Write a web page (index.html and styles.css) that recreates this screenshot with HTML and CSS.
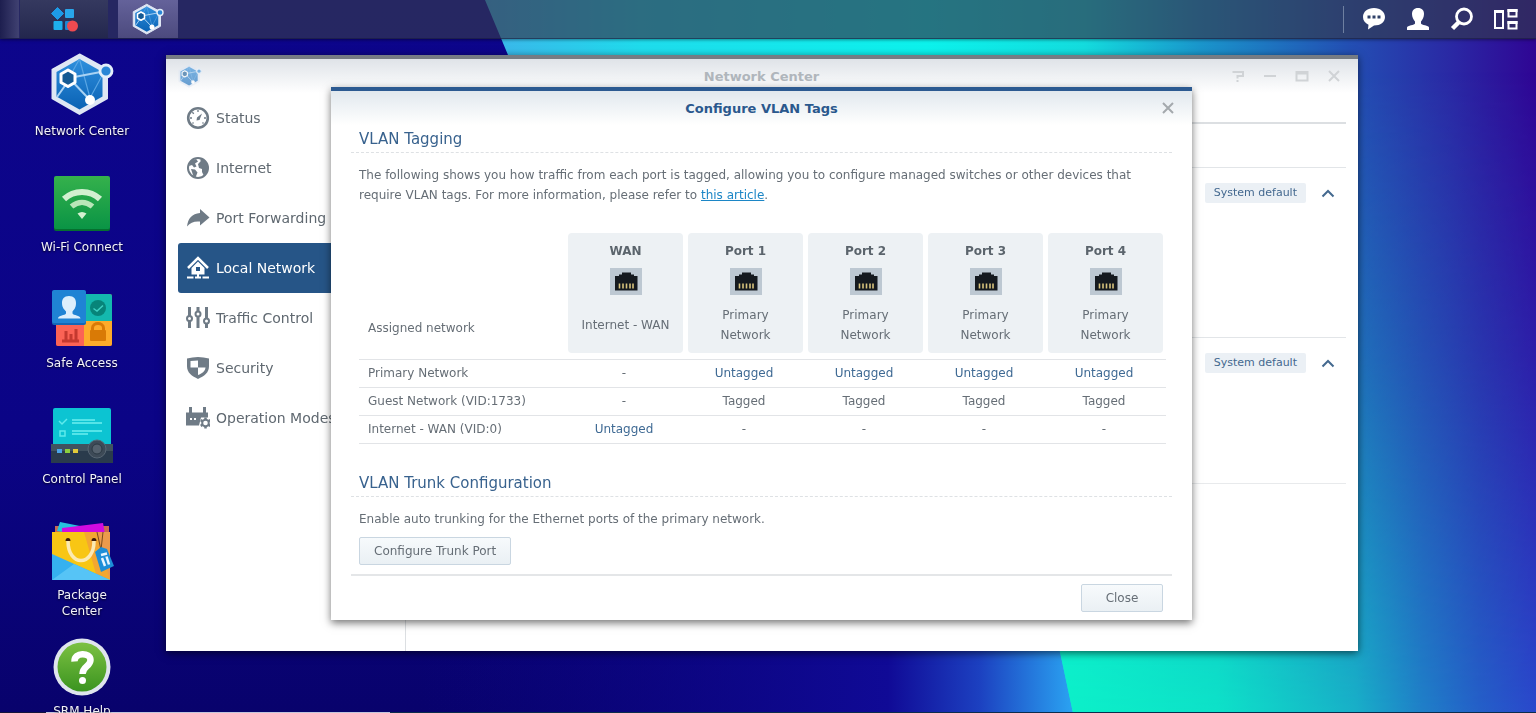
FILE: index.html
```html
<!doctype html>
<html lang="en">
<head>
	<meta charset="UTF-8" />
	<meta name="viewport" content="width=device-width, initial-scale=1.0" />
	<title>Network Center</title>
	<link rel="stylesheet" href="styles.css">
</head>
<body>
	<!-- Shared icons -->
	<svg class="defs" aria-hidden="true">
		<defs>
			<linearGradient id="hexFill" x1="0" y1="0" x2="0" y2="1">
				<stop offset="0" stop-color="#2f8fdd" />
				<stop offset="1" stop-color="#0a62b4" />
			</linearGradient>
			<symbol id="network" viewBox="0 0 64 64">
				<path d="M29.500 2.500 L57 17.500 V46.500 L29.500 62 L2.500 46.500 V17.500Z" fill="#dfe7f4" stroke="#dfe7f4" stroke-width="2" stroke-linejoin="round" />
				<path d="M29.500 7 L52.500 20 V44.500 L29.500 57.500 L6.500 44.500 V20Z" fill="url(#hexFill)" />
				<path d="M29.500 7 L40 46 L53 22 M29.500 7 L20 24" fill="none" stroke="#5aa6e4" stroke-width="1.200" />
				<path d="M19 26 L56 19 M19 26 L39 47 M19 28 L7 45" fill="none" stroke="#a9d2f3" stroke-width="2" />
				<path d="M18 18 l7 4 v8.500 l-7 4 l-7 -4 v-8.500z" fill="#155a94" stroke="#fff" stroke-width="3" stroke-linejoin="round" />
				<circle cx="40" cy="48" r="5" fill="#fff" />
				<circle cx="56" cy="19" r="6" fill="#2a86d6" stroke="#e3eefa" stroke-width="2.800" />
			</symbol>
			<symbol id="port" viewBox="0 0 32 27">
				<path d="M0 0H32V27H0z" fill="#bdc8d2" />
				<path d="M5 8h4V6.500h3V4.500h9v2h3V8h3.500v14.500h-22.500z" fill="#15191f" />
				<path d="M9.500 15.500v5M13 15.500v5M16.500 15.500v5M20 15.500v5M23 15.500v5" stroke="#d8c27c" stroke-width="1.600" />
			</symbol>
			<symbol id="chevron" viewBox="0 0 14 9">
				<path d="M1.500 7.500 L7 2 L12.500 7.500" fill="none" stroke="#44698f" stroke-width="2" />
			</symbol>
		</defs>
	</svg>

	<svg class="wallpaper" viewBox="0 0 1536 713" preserveAspectRatio="none" aria-hidden="true">
		<defs>
			<linearGradient id="deep" x1="0" y1="0" x2="0" y2="1">
				<stop offset="0" stop-color="#0d058c" />
				<stop offset="0.600" stop-color="#0b0486" />
				<stop offset="1" stop-color="#08026c" />
			</linearGradient>
			<linearGradient id="fold" gradientUnits="userSpaceOnUse" x1="420" y1="0" x2="1070" y2="0">
				<stop offset="0" stop-color="#0c0488" stop-opacity="0" />
				<stop offset="0.720" stop-color="#100a96" />
				<stop offset="0.860" stop-color="#1c40c0" />
				<stop offset="1" stop-color="#2aa0f0" />
			</linearGradient>
			<linearGradient id="waveTop" gradientUnits="userSpaceOnUse" x1="485" y1="0" x2="1536" y2="0">
				<stop offset="0" stop-color="#3db4ea" />
				<stop offset="0.150" stop-color="#1fdcec" />
				<stop offset="0.420" stop-color="#0cf2ec" />
				<stop offset="0.570" stop-color="#14dcde" />
				<stop offset="0.680" stop-color="#1a96cc" />
				<stop offset="0.820" stop-color="#2350b4" />
				<stop offset="0.920" stop-color="#2a28a4" />
				<stop offset="1" stop-color="#2f0594" />
			</linearGradient>
			<linearGradient id="waveBottom" gradientUnits="userSpaceOnUse" x1="1060" y1="0" x2="1536" y2="0">
				<stop offset="0" stop-color="#0cf0c8" />
				<stop offset="0.330" stop-color="#0de2c8" />
				<stop offset="0.620" stop-color="#18b0c8" />
				<stop offset="0.760" stop-color="#1f80c8" />
				<stop offset="0.880" stop-color="#2460c8" />
				<stop offset="1" stop-color="#2a48cc" />
			</linearGradient>
			<linearGradient id="fade" x1="0" y1="0" x2="0" y2="1">
				<stop offset="0.100" stop-color="#000" />
				<stop offset="0.500" stop-color="#606060" />
				<stop offset="0.800" stop-color="#c0c0c0" />
				<stop offset="1" stop-color="#fff" />
			</linearGradient>
			<mask id="fadeMask">
				<path d="M0 0H1536V713H0z" fill="url(#fade)" />
			</mask>
		</defs>
		<path d="M0 0H1536V713H0z" fill="url(#deep)" />
		<path d="M420 400H1100V713H420z" fill="url(#fold)" />
		<path d="M485 0 L508 55 C600 270 980 300 1060 652 L1073 713 H1536 V0z" fill="url(#waveTop)" />
		<path d="M1000 0 V520 L1060 652 L1073 713 H1536 V0z" fill="url(#waveBottom)" mask="url(#fadeMask)" />
	</svg>

	<header class="taskbar">
		<div class="tasks">
			<span class="task-edge"></span>
			<button class="task menu" aria-label="Main Menu">
				<svg width="28" height="25" viewBox="0 0 28 25">
					<path d="M7.500 .5 L13.500 6.500 L7.500 12.500 L1.500 6.500z" fill="#1d9ae6" stroke="#1d9ae6" stroke-linejoin="round" />
					<rect x="15" y="2" width="9" height="9" rx="1" fill="#28a6ea" />
					<rect x="3.500" y="14" width="9" height="9" rx="1" fill="#1eb0ee" />
					<rect x="15" y="14" width="9" height="9" rx="1" fill="#1c86d2" />
					<circle cx="22.500" cy="19" r="5.500" fill="#ee4a50" />
				</svg>
			</button>
			<button class="task active" aria-label="Network Center">
				<svg width="32" height="32"><use href="#network" /></svg>
			</button>
		</div>
		<div class="tray">
			<button class="tray-button" aria-label="Notifications">
				<svg width="24" height="24" viewBox="0 0 24 24">
					<path d="M12 1C5.500 1 1 4.800 1 10c0 3.500 2 6.200 5.500 7.700L6 22.500l6-4c6.500 0 11-3.500 11-8.500s-4.500-9-11-9z" fill="#fff" />
					<path d="M5.500 8.500h3v3h-3zM10.500 8.500h3v3h-3zM15.500 8.500h3v3h-3z" fill="#2e4068" />
				</svg>
			</button>
			<button class="tray-button" aria-label="Options">
				<svg width="24" height="24" viewBox="0 0 24 24">
					<path d="M12 1c4 0 6 2.500 6 6 0 3.500-1.500 5.500-3 7.500v2c0 1.500 8 2 8 4V23H1v-2.500c0-2 8-2.500 8-4v-2C7.500 12.500 6 10.500 6 7c0-3.500 2-6 6-6z" fill="#fff" />
				</svg>
			</button>
			<button class="tray-button" aria-label="Search">
				<svg width="24" height="24" viewBox="0 0 24 24">
					<circle cx="14" cy="9.500" r="7.500" fill="none" stroke="#fff" stroke-width="2.800" />
					<path d="M9 15 L2.500 21.500" stroke="#fff" stroke-width="4.500" />
				</svg>
			</button>
			<button class="tray-button" aria-label="Widgets">
				<svg width="26" height="24" viewBox="0 0 26 24">
					<path d="M2 4h8v17H2zM15.500 3h8v6.500h-8zM15.500 15h8v6.500h-8z" fill="none" stroke="#fff" stroke-width="2" />
					<path d="M1 3h10v3H1zM14.500 2h10v3h-10zM14.500 14h10v3h-10z" fill="#fff" />
				</svg>
			</button>
		</div>
	</header>

	<main class="desktop">
		<nav class="shortcuts">
			<a class="shortcut" href="#network-center">
				<svg width="64" height="64"><use href="#network" /></svg>
				<span>Network Center</span>
			</a>
			<a class="shortcut" href="#wifi">
				<svg width="64" height="64" viewBox="0 0 64 64">
					<defs>
						<linearGradient id="wifiFill" x1="0" y1="0" x2="0" y2="1">
							<stop offset="0" stop-color="#35b14c" />
							<stop offset="1" stop-color="#0a9445" />
						</linearGradient>
					</defs>
					<rect x="4" y="10" width="56" height="53" rx="2" fill="#06702f" />
					<rect x="4" y="8" width="56" height="53" rx="2" fill="url(#wifiFill)" />
					<path d="M14 31 C24 21.500 40 21.500 50 31" fill="none" stroke="#d3f0d0" stroke-width="6" />
					<path d="M21.500 38.500 C28 33 36 33 42.500 38.500" fill="none" stroke="#b9e6b8" stroke-width="5.500" />
					<path d="M27.500 45.500 Q32 42.500 36.500 45.500 L32 51z" fill="#d3f0d0" />
				</svg>
				<span>Wi-Fi Connect</span>
			</a>
			<a class="shortcut" href="#safe-access">
				<svg width="64" height="64" viewBox="0 0 64 64">
					<rect x="6" y="10" width="56" height="52" rx="2" fill="#c63a36" />
					<path d="M34 10h26a2 2 0 0 1 2 2v25H34z" fill="#14b8ae" />
					<path d="M6 37h28v25H8a2 2 0 0 1-2-2z" fill="#fb6355" />
					<path d="M34 37h28v23a2 2 0 0 1-2 2H34z" fill="#fdab2a" />
					<rect x="2" y="7" width="34" height="34" rx="2" fill="#1467b6" />
					<rect x="2" y="6" width="34" height="33" rx="2" fill="#1f83d4" />
					<path d="M19 12c5 0 7 3 7 7 0 5-2 6.500-3.500 8.500v2c1 2 7.500 1.500 8 5H8c.5-3.500 7-3 8-5v-2c-1.500-2-4-3.500-4-8.500 0-4 2-7 7-7z" fill="#dceefc" />
					<circle cx="48" cy="24" r="8" fill="#078479" />
					<path d="M43.500 24.500 L47 27 L53 21.500" fill="none" stroke="#3fd0c2" stroke-width="1.500" />
					<path d="M12 57h17M16 56v-9M21 56v-6M26 56v-11" stroke="#c4392f" stroke-width="3" />
					<rect x="40" y="46" width="16" height="11" rx="1" fill="#d97a06" />
					<path d="M42.500 47v-3c0-6 11-6 11 0v3" fill="none" stroke="#d97a06" stroke-width="3" />
				</svg>
				<span>Safe Access</span>
			</a>
			<a class="shortcut" href="#control-panel">
				<svg width="64" height="64" viewBox="0 0 64 64">
					<rect x="3" y="8" width="58" height="44" rx="2" fill="#0cc4d2" />
					<path d="M9 21l3 3 5-5M10 31h5v5h-5z" fill="none" stroke="#5eeaec" stroke-width="1.500" />
					<path d="M22 20h23M22 23h30M22 31h30M22 34h16" stroke="#6ceef0" stroke-width="1.500" />
					<path d="M1 44h62v19H1z" fill="#2a3b4c" />
					<path d="M1 44h62v7H1z" fill="#41525f" />
					<path d="M7 49h5v4H7z" fill="#4aa4e8" />
					<path d="M15 49h5v4h-5z" fill="#8cd03e" />
					<path d="M23 49h5v4h-5z" fill="#e2ca3a" />
					<circle cx="47" cy="49" r="9" fill="#3d4a57" stroke="#596774" />
					<circle cx="47" cy="49" r="5" fill="#55616d" stroke="#2b3843" />
				</svg>
				<span>Control Panel</span>
			</a>
			<a class="shortcut" href="#package-center">
				<svg width="64" height="64" viewBox="0 0 64 64">
					<path d="M5 10h54v10H5z" fill="#c96b52" />
					<path d="M10 6 L30 10 L28 18 L7 15z" fill="#25c4de" />
					<path d="M12 12 L53 7 L55 18 H12z" fill="#d10be0" />
					<path d="M2 16H60V64H2z" fill="#f8c614" />
					<path d="M34 16H60V64L46 58z" fill="#f3a732" />
					<path d="M46 16h14v48z" fill="#eb9a4c" />
					<path d="M2 38 L60 64H2z" fill="#35b1f0" />
					<path d="M2 64 L24 48 L60 64z" fill="#56c4f6" />
					<path d="M18 25 C18 51 44 51 44 25" fill="none" stroke="#fbeab4" stroke-width="3.500" />
					<path d="M15.500 25a2.500 3 0 0 1 5 0zM41.500 25a2.500 3 0 0 1 5 0z" fill="#3b1c0a" />
					<path d="M47 16 L51 34 L53 16" fill="none" stroke="#7a4a1c" />
					<path d="M45 36 L51 31 L57 33 L64 50 L51 56z" fill="#1d8ed8" />
					<path d="M51 39 l6 -1.500 M52 42 l3 8 M56.500 40.500 l2.500 8" stroke="#e7f5ff" stroke-width="2.500" />
				</svg>
				<span>Package<br>Center</span>
			</a>
			<a class="shortcut" href="#help">
				<svg width="64" height="64" viewBox="0 0 64 64">
					<defs>
						<linearGradient id="helpFill" x1="0" y1="0" x2="0" y2="1">
							<stop offset="0" stop-color="#7cc142" />
							<stop offset="1" stop-color="#3b9420" />
						</linearGradient>
					</defs>
					<circle cx="32" cy="35" r="28.500" fill="#dfe5ee" />
					<circle cx="32" cy="35" r="24.500" fill="url(#helpFill)" />
					<path d="M24.500 29.500 C24 20 40.500 20 40.500 28 C40.500 34.500 32.500 34 32.500 42" fill="none" stroke="#fff" stroke-width="6.500" />
					<circle cx="32.500" cy="48.500" r="3.500" fill="#fff" />
				</svg>
				<span>SRM Help</span>
			</a>
		</nav>

		<section class="window">
			<header class="titlebar">
				<svg class="titlebar-icon" width="24" height="24"><use href="#network" /></svg>
				<h1>Network Center</h1>
				<div class="window-controls">
					<button aria-label="Help">
						<svg width="14" height="14" viewBox="0 0 14 14"><path d="M1.500 3H12v4H6.500v2.500M6.500 11v2" /></svg>
					</button>
					<button aria-label="Minimize">
						<svg width="14" height="14" viewBox="0 0 14 14"><path d="M1 7h12" /></svg>
					</button>
					<button aria-label="Maximize">
						<svg width="14" height="14" viewBox="0 0 14 14"><path d="M1.500 3h11v8.500h-11zM2 4.500h10" /></svg>
					</button>
					<button aria-label="Close window">
						<svg width="14" height="14" viewBox="0 0 14 14"><path d="M2 2l10 10M12 2L2 12" /></svg>
					</button>
				</div>
			</header>
			<div class="window-body">
				<nav class="sidebar">
					<a class="nav-item" href="#status">
						<svg width="24" height="24" viewBox="0 0 24 24">
							<circle cx="12" cy="12" r="9.800" fill="none" stroke="currentColor" stroke-width="2.600" />
							<path d="M12 4v2M4 12h2M18 12h2M6.300 6.300l1.500 1.500M17.500 17.500l-1-1M6.500 17.500l1-1" stroke="currentColor" stroke-width="1.300" />
							<path d="M16 7.500 L13.500 14 L10.500 14.500 L11 11.500z" fill="currentColor" />
						</svg>
						Status
					</a>
					<a class="nav-item" href="#internet">
						<svg width="24" height="24" viewBox="0 0 24 24">
							<circle cx="12" cy="12" r="10" fill="none" stroke="currentColor" stroke-width="2" />
							<path d="M4 5.500l6-2.500 2 2.500-3 2 1.500 3-2.500 1-2-2.500L3 10zM5 13l4 .5 2.500 3-2 5-2-1z" fill="currentColor" />
							<path d="M14.500 2.500l5 2.500 3 6-1.500 6-3 3-2-4v-3l-3-1-1-4 2.500-2.500z" fill="currentColor" />
						</svg>
						Internet
					</a>
					<a class="nav-item" href="#port-forwarding">
						<svg width="24" height="24" viewBox="0 0 24 24">
							<path d="M14 3 L23.500 11.500 L14 19.500 V15.500 C8 15 4.500 16.500 1 20.500 C2 12.500 6 7.500 14 7z" fill="currentColor" />
						</svg>
						Port Forwarding
					</a>
					<a class="nav-item selected" href="#local-network">
						<svg width="24" height="24" viewBox="0 0 24 24">
							<path d="M2 12 L12 2 L22 12" fill="none" stroke="currentColor" stroke-width="2.500" />
							<path d="M12 5.500 L18.500 12 V18.500 H5.500 V12z" fill="currentColor" />
							<path d="M10 11h4v4h-4z" fill="#265587" />
							<path d="M1 21.500h6.500M9 21.500h6M16.500 21.500H23M12 18v4" stroke="currentColor" stroke-width="2" />
						</svg>
						Local Network
					</a>
					<a class="nav-item" href="#traffic">
						<svg width="24" height="24" viewBox="0 0 24 24">
							<path d="M3.500 1v9M3.500 15v7M12 1v4M12 11v11M20.500 1v11M20.500 18v4" stroke="currentColor" stroke-width="3" />
							<circle cx="3.500" cy="12.500" r="2.500" fill="none" stroke="currentColor" stroke-width="2" />
							<circle cx="12" cy="8" r="2.500" fill="none" stroke="currentColor" stroke-width="2" />
							<circle cx="20.500" cy="15" r="2.500" fill="none" stroke="currentColor" stroke-width="2" />
						</svg>
						Traffic Control
					</a>
					<a class="nav-item" href="#security">
						<svg width="24" height="24" viewBox="0 0 24 24">
							<path d="M1 2.500 Q12 -.5 23 2.500 V10 C23 17 18 20 12 23 C6 20 1 17 1 10z" fill="currentColor" />
							<path d="M12 4.500 V11.500 H4.500 V5z M12 11.500 H19.500 C19 15.500 16 17.500 12 19z" fill="#fff" />
						</svg>
						Security
					</a>
					<a class="nav-item" href="#modes">
						<svg width="24" height="24" viewBox="0 0 24 24">
							<path d="M4.500 1v6M18.500 1v6" stroke="currentColor" stroke-width="3" />
							<path d="M0 6.500h22v5h-7l-2 8H0z" fill="currentColor" />
							<path d="M4 12h2v2H4zM8 12h2v2H8z" fill="#fff" />
							<path d="M19.500 11.500v11M14.700 14.200l9.600 5.600M14.700 19.800l9.600-5.600" stroke="currentColor" stroke-width="2.500" />
							<circle cx="19.500" cy="17" r="3.300" fill="#fff" stroke="currentColor" stroke-width="2" />
						</svg>
						Operation Modes
					</a>
				</nav>
				<div class="content">
					<div class="tabs"></div>
					<div class="toolbar"></div>
					<section class="network-row">
						<span class="tag">System default</span>
						<button class="collapse" aria-label="Collapse">
							<svg width="14" height="9"><use href="#chevron" /></svg>
						</button>
					</section>
					<section class="network-row short">
						<span class="tag">System default</span>
						<button class="collapse" aria-label="Collapse">
							<svg width="14" height="9"><use href="#chevron" /></svg>
						</button>
					</section>
				</div>
			</div>
		</section>

		<section class="dialog" role="dialog" aria-labelledby="dialog-title">
			<header class="dialog-header">
				<h2 id="dialog-title">Configure VLAN Tags</h2>
				<button class="dialog-close" aria-label="Close dialog">
					<svg width="14" height="14" viewBox="0 0 14 14"><path d="M2 2l10 10M12 2L2 12" /></svg>
				</button>
			</header>
			<div class="dialog-body">
				<h3>VLAN Tagging</h3>
				<p>The following shows you how traffic from each port is tagged, allowing you to configure managed switches or other devices that require VLAN tags. For more information, please refer to <a href="#article">this article</a>.</p>
				<table class="vlan-table">
					<thead>
						<tr>
							<th class="assigned" scope="col">Assigned network</th>
							<th scope="col">
								<div class="port-card">
									<strong>WAN</strong>
									<svg width="32" height="27"><use href="#port" /></svg>
									<span>Internet - WAN</span>
								</div>
							</th>
							<th scope="col">
								<div class="port-card">
									<strong>Port 1</strong>
									<svg width="32" height="27"><use href="#port" /></svg>
									<span>Primary Network</span>
								</div>
							</th>
							<th scope="col">
								<div class="port-card">
									<strong>Port 2</strong>
									<svg width="32" height="27"><use href="#port" /></svg>
									<span>Primary Network</span>
								</div>
							</th>
							<th scope="col">
								<div class="port-card">
									<strong>Port 3</strong>
									<svg width="32" height="27"><use href="#port" /></svg>
									<span>Primary Network</span>
								</div>
							</th>
							<th scope="col">
								<div class="port-card">
									<strong>Port 4</strong>
									<svg width="32" height="27"><use href="#port" /></svg>
									<span>Primary Network</span>
								</div>
							</th>
						</tr>
					</thead>
					<tbody>
						<tr>
							<th scope="row">Primary Network</th>
							<td>-</td>
							<td class="untagged">Untagged</td>
							<td class="untagged">Untagged</td>
							<td class="untagged">Untagged</td>
							<td class="untagged">Untagged</td>
						</tr>
						<tr>
							<th scope="row">Guest Network (VID:1733)</th>
							<td>-</td>
							<td>Tagged</td>
							<td>Tagged</td>
							<td>Tagged</td>
							<td>Tagged</td>
						</tr>
						<tr>
							<th scope="row">Internet - WAN (VID:0)</th>
							<td class="untagged">Untagged</td>
							<td>-</td>
							<td>-</td>
							<td>-</td>
							<td>-</td>
						</tr>
					</tbody>
				</table>
				<h3>VLAN Trunk Configuration</h3>
				<p>Enable auto trunking for the Ethernet ports of the primary network.</p>
				<button class="button">Configure Trunk Port</button>
			</div>
			<footer class="dialog-footer">
				<button class="button">Close</button>
			</footer>
		</section>
	</main>
	<div class="bottom-edge"></div>
</body>
</html>
```
FILE: styles.css
```css
* {
	box-sizing: border-box;
}
body {
	margin: 0;
	height: 100vh;
	display: flex;
	flex-direction: column;
	overflow: hidden;
	background: #0b0484;
	color: #666e76;
	font-family: Verdana, "DejaVu Sans", sans-serif;
	font-size: 12px;
}
h1, h2, h3, p {
	margin: 0;
}
button {
	padding: 0;
	border: 0;
	background: none;
	font: inherit;
	color: inherit;
	cursor: pointer;
}
svg {
	display: block;
	flex-shrink: 0;
}
.defs {
	position: absolute;
	width: 0;
	height: 0;
}
.wallpaper {
	position: fixed;
	inset: 0;
	z-index: -1;
	width: 100%;
	height: 100%;
}

/* Taskbar */
.taskbar {
	height: 39px;
	flex-shrink: 0;
	display: flex;
	justify-content: space-between;
	background: rgba(50, 56, 78, 0.68);
	border-bottom: 1px solid rgba(20, 24, 60, 0.5);
	box-shadow: 0 1px 3px rgba(0, 0, 0, 0.4);
}
.tasks,
.tray {
	display: flex;
	align-items: center;
}
.task-edge {
	width: 19px;
	height: 100%;
	margin-right: 1px;
	background: linear-gradient(to right, rgba(20, 22, 60, 0.5), rgba(90, 92, 130, 0.5));
}
.task {
	display: flex;
	align-items: center;
	justify-content: center;
	height: 38px;
}
.task.menu {
	width: 88px;
	margin-right: 10px;
	background: linear-gradient(#35395f, #23274e);
}
.task.active {
	width: 60px;
	background: linear-gradient(#64629a, #4c4a7e);
}
.tray {
	padding-right: 8px;
}
.tray::before {
	content: "";
	width: 1px;
	height: 27px;
	margin-right: 8px;
	background: #6e7fa0;
}
.tray-button {
	width: 44px;
	display: flex;
	justify-content: center;
}

/* Desktop */
.desktop {
	position: relative;
	flex: 1;
	min-height: 0;
}
.shortcuts {
	display: grid;
	grid-auto-rows: 116px;
	width: 96px;
	margin-left: 34px;
	padding-top: 13px;
}
.shortcut {
	display: flex;
	flex-direction: column;
	align-items: center;
	gap: 7px;
	color: #f2f2fa;
	line-height: 16px;
	text-align: center;
	text-decoration: none;
	text-shadow: 0 1px 2px rgba(0, 0, 0, 0.8);
}

/* Application window */
.window {
	position: absolute;
	inset: 16px 178px 61px 166px;
	display: flex;
	flex-direction: column;
	border-top: 4px solid #767c84;
	background: #fff;
	box-shadow: 0 2px 8px rgba(0, 0, 0, 0.6);
}
.titlebar {
	display: flex;
	align-items: center;
	height: 34px;
	padding: 0 17px 0 12px;
	background: linear-gradient(#dfe3e8, #fff);
}
.titlebar-icon {
	opacity: 0.6;
}
.titlebar h1 {
	flex: 1;
	padding-left: 90px;
	color: #b0b6bc;
	font-size: 13px;
	text-align: center;
}
.window-controls {
	display: flex;
	gap: 18px;
}
.window-controls svg,
.dialog-close svg {
	fill: none;
	stroke: #d0d3d6;
	stroke-width: 2;
}
.window-body {
	flex: 1;
	display: flex;
}
.sidebar {
	width: 240px;
	padding: 0 12px;
	border-right: 1px solid #dcdfe2;
}
.nav-item {
	display: flex;
	align-items: center;
	gap: 6px;
	height: 50px;
	padding: 0 8px;
	border-radius: 3px;
	color: #5f6870;
	font-size: 14px;
	text-decoration: none;
	white-space: nowrap;
}
.nav-item svg {
	color: #6f7b86;
}
.nav-item.selected {
	background: #265587;
	color: #fff;
}
.nav-item.selected svg {
	color: #fff;
}
.content {
	flex: 1;
	padding: 0 12px;
}
.tabs {
	height: 31px;
	border-bottom: 2px solid #dcdfe2;
}
.toolbar {
	height: 43px;
}
.network-row {
	display: flex;
	align-items: flex-start;
	justify-content: flex-end;
	gap: 15px;
	height: 170px;
	padding: 15px 11px;
	border-top: 1px solid #e2e5e8;
}
.network-row.short {
	height: 147px;
	border-bottom: 1px solid #e8eaec;
}
.tag {
	padding: 0 9px;
	border-radius: 2px;
	background: #ebf0f5;
	color: #43688f;
	font-size: 11px;
	line-height: 20px;
}
.collapse {
	padding: 6px 0;
}

/* VLAN dialog */
.dialog {
	position: absolute;
	top: 48px;
	left: 331px;
	right: 344px;
	border-top: 4px solid #2c5a91;
	background: #fff;
	box-shadow: 0 3px 8px rgba(0, 0, 0, 0.55);
}
.dialog-header {
	display: flex;
	align-items: center;
	height: 34px;
	padding: 0 17px;
	background: linear-gradient(#e1e8ee, #fff);
}
.dialog-header h2 {
	flex: 1;
	padding-left: 14px;
	color: #2a588d;
	font-size: 13px;
	text-align: center;
}
.dialog-close svg {
	stroke: #a4a9ad;
}
.dialog-body {
	padding: 4px 20px 9px;
}
.dialog-body h3 {
	padding: 0 8px 3px;
	border-bottom: 1px dashed #dee1e4;
	color: #38628e;
	font-size: 15px;
	font-weight: normal;
	line-height: 20px;
}
.dialog-body p {
	margin: 12px 0 0 8px;
	padding-right: 28px;
	line-height: 20px;
}
.dialog-body p a {
	color: #1c86c6;
}
.vlan-table {
	width: calc(100% - 14px);
	margin: 28px 6px 29px 8px;
	table-layout: fixed;
	border-collapse: collapse;
}
.vlan-table th {
	padding: 0;
	font-weight: normal;
}
.vlan-table thead th {
	padding: 0 3px 6px 2px;
}
.vlan-table thead .assigned {
	width: 207px;
	padding: 0 9px 24px;
	text-align: left;
	vertical-align: bottom;
}
.port-card {
	display: flex;
	flex-direction: column;
	align-items: center;
	height: 120px;
	padding: 8px 0 0;
	border-radius: 4px;
	background: #edf1f4;
}
.port-card strong {
	margin-bottom: 7px;
	line-height: 20px;
	color: #5b646c;
}
.port-card span {
	flex: 1;
	display: flex;
	align-items: center;
	max-width: 96px;
	padding-top: 2px;
	line-height: 20px;
}
.vlan-table tbody tr {
	height: 28px;
	border-top: 1px solid #e2e4e7;
}
.vlan-table tbody tr:last-child {
	border-bottom: 1px solid #e2e4e7;
}
.vlan-table tbody th {
	padding: 0 0 2px 9px;
	text-align: left;
}
.vlan-table td {
	padding: 0 4px 2px 0;
	text-align: center;
}
.vlan-table .untagged {
	color: #3f6a94;
}
.button {
	display: block;
	height: 28px;
	min-width: 82px;
	padding: 0 14px;
	border: 1px solid #c9d6e1;
	border-radius: 2px;
	background: linear-gradient(#f7fafc, #eaf0f4);
}
.dialog-body .button {
	margin: 8px 0 0 8px;
}
.dialog-footer {
	display: flex;
	justify-content: flex-end;
	margin: 0 20px;
	padding: 8px 9px;
	border-top: 2px solid #e4e6e8;
}
.bottom-edge {
	height: 1px;
	flex-shrink: 0;
	background: linear-gradient(to right, #14143c 46px, #c3c6dc 46px, #c3c6dc 390px, #0c2c4c 390px);
}
```
